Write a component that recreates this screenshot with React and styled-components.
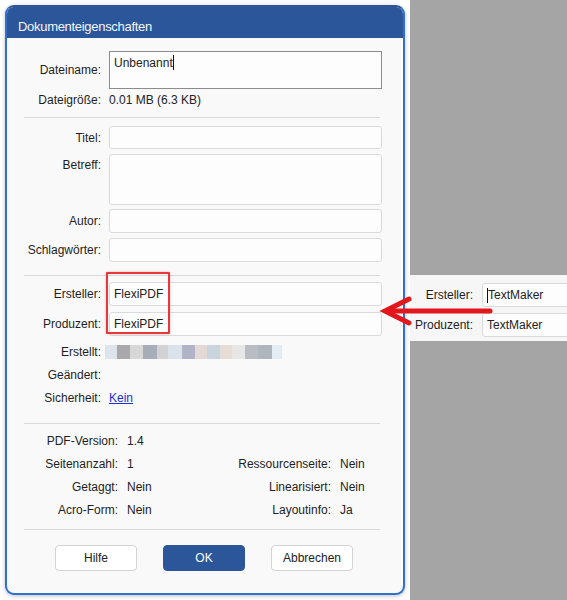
import React from 'react';
import styled, { createGlobalStyle } from 'styled-components';

const Global = createGlobalStyle`
  html, body {
    margin: 0;
    padding: 0;
    background: #ffffff;
  }
  * {
    box-sizing: border-box;
  }
`;

const Page = styled.div`
  position: relative;
  display: flex;
  width: 567px;
  height: 600px;
  overflow: hidden;
  font-family: 'Liberation Sans', Arial, sans-serif;
  font-size: 12px;
  color: #1e1e1e;
`;

const LeftPane = styled.div`
  width: 410px;
  padding: 5px 5px 5px 5px;
  background: #ffffff;
`;

const Dialog = styled.div`
  display: flex;
  flex-direction: column;
  width: 400px;
  height: 590px;
  border: 2px solid #2f6fd3;
  border-top-color: #2b579a;
  border-radius: 9px;
  overflow: hidden;
  background: #f9f9f9;
  box-shadow: 0 1px 4px rgba(0, 0, 0, 0.25);
`;

const TitleBar = styled.div`
  height: 31px;
  padding: 12px 0 0 11px;
  background: #2b579a;
  color: #f2f5fa;
  font-size: 13px;
  line-height: 16px;
  letter-spacing: -0.3px;
`;

const Body = styled.div`
  display: flex;
  flex-direction: column;
  padding: 0 21px 0 17px;
`;

const Row = styled.div`
  display: flex;
  align-items: ${p => (p.$top ? 'flex-start' : 'center')};
  gap: 8px;
  margin-top: ${p => p.$mt || 0}px;
  min-height: 18px;
`;

const Label = styled.div`
  width: 77px;
  flex: none;
  text-align: right;
  line-height: 18px;
  padding-top: ${p => (p.$top ? 2 : 0)}px;
  white-space: nowrap;
`;

const Value = styled.div`
  line-height: 18px;
  color: #222;
`;

const Field = styled.div`
  flex: 1;
  height: ${p => p.$h}px;
  background: #fdfdfd;
  border: 1px solid ${p => (p.$strong ? '#8c8c8c' : '#dadada')};
  border-radius: ${p => (p.$strong ? 0 : 3)}px;
  padding: ${p => (p.$strong ? '3px 4px' : '0 4px')};
  display: flex;
  align-items: ${p => (p.$strong ? 'flex-start' : 'center')};
  line-height: 16px;
  color: #222;
  white-space: nowrap;
  overflow: hidden;
`;

const Caret = styled.span`
  display: inline-block;
  width: 1px;
  height: 15px;
  background: #111;
`;

const Separator = styled.div`
  height: 1px;
  margin-top: ${p => p.$mt}px;
  margin-right: 2px;
  background: #d9d9d9;
`;

const Group = styled.div`
  position: relative;
  display: flex;
  flex-direction: column;
`;

const Highlight = styled.div`
  position: absolute;
  left: 82px;
  top: -4px;
  width: 64px;
  height: 62px;
  border: 2px solid #e8363a;
  border-radius: 1px;
  box-shadow: 0 0 3px rgba(200, 40, 40, 0.3);
  pointer-events: none;
`;

const Pixels = styled.div`
  display: flex;
  height: 14px;
  margin-left: -4px;
`;

const Pixel = styled.span`
  width: ${p => p.$w}px;
  height: 14px;
  background: ${p => p.$c};
`;

const Link = styled.a`
  color: #1b2fd6;
  text-decoration: underline;
  line-height: 18px;
`;

const InfoGrid = styled.div`
  display: grid;
  grid-template-columns: 94px 75px 120px auto;
  column-gap: 9px;
  row-gap: 5px;
  margin-top: 8px;
  line-height: 18px;
`;

const InfoLabel = styled.div`
  text-align: right;
  white-space: nowrap;
`;

const InfoValue = styled.div`
  color: #222;
`;

const Buttons = styled.div`
  display: flex;
  justify-content: center;
  gap: 26px;
  margin-top: 15px;
  margin-right: -2px;
`;

const Button = styled.button`
  width: 82px;
  height: 26px;
  border-radius: 4px;
  border: 1px solid ${p => (p.$primary ? '#2b579a' : '#d3d3d3')};
  background: ${p => (p.$primary ? '#2b579a' : '#ffffff')};
  color: ${p => (p.$primary ? '#ffffff' : '#222')};
  font-family: 'Liberation Sans', Arial, sans-serif;
  font-size: 12px;
  padding: 0;
`;

const RightPane = styled.div`
  flex: 1;
  background: #a5a5a5;
  padding-top: 275px;
`;

const Inset = styled.div`
  display: flex;
  flex-direction: column;
  gap: 6px;
  height: 66px;
  padding-top: 8px;
  background: #f6f6f6;
`;

const InsetRow = styled.div`
  display: flex;
  align-items: center;
  gap: 9px;
`;

const InsetLabel = styled.div`
  width: 63px;
  flex: none;
  text-align: right;
  white-space: nowrap;
`;

const InsetField = styled.div`
  width: 110px;
  height: 24px;
  flex: none;
  display: flex;
  align-items: center;
  padding-left: 4px;
  background: #fdfdfd;
  border: 1px solid #dadada;
  border-radius: 3px;
  color: #222;
`;

const Arrow = styled.svg`
  position: absolute;
  left: 381px;
  top: 296px;
  width: 115px;
  height: 32px;
  overflow: visible;
`;

const blur = [
  ['#dde4ec', 12], ['#aaa8ad', 13], ['#d8d7d7', 13], ['#a9adb8', 14],
  ['#d2d2d4', 11], ['#dce2ea', 14], ['#b1b4c6', 13], ['#e2d8d6', 12],
  ['#cad4de', 13], ['#e6dcd6', 12], ['#e6e6e6', 13], ['#b9bcc2', 13],
  ['#b0b6bd', 14], ['#e4ecf4', 10],
];

export default function App() {
  return (
    <Page>
      <Global />
      <LeftPane>
        <Dialog>
          <TitleBar>Dokumenteigenschaften</TitleBar>
          <Body>
            <Row $mt={13}>
              <Label>Dateiname:</Label>
              <Field $h={38} $strong>
                Unbenannt<Caret />
              </Field>
            </Row>
            <Row $mt={2}>
              <Label>Dateigröße:</Label>
              <Value>0.01 MB (6.3 KB)</Value>
            </Row>
            <Separator $mt={8} />

            <Row $mt={8}>
              <Label>Titel:</Label>
              <Field $h={23} />
            </Row>
            <Row $mt={5} $top>
              <Label $top>Betreff:</Label>
              <Field $h={51} />
            </Row>
            <Row $mt={4}>
              <Label>Autor:</Label>
              <Field $h={24} />
            </Row>
            <Row $mt={5}>
              <Label>Schlagwörter:</Label>
              <Field $h={24} />
            </Row>
            <Separator $mt={13} />

            <Group>
              <Row $mt={6}>
                <Label>Ersteller:</Label>
                <Field $h={24}>FlexiPDF</Field>
              </Row>
              <Row $mt={6}>
                <Label>Produzent:</Label>
                <Field $h={24}>FlexiPDF</Field>
              </Row>
              <Highlight />
            </Group>
            <Row $mt={7}>
              <Label>Erstellt:</Label>
              <Pixels>
                {blur.map(([c, w], i) => (
                  <Pixel key={i} $c={c} $w={w} />
                ))}
              </Pixels>
            </Row>
            <Row $mt={5}>
              <Label>Geändert:</Label>
            </Row>
            <Row $mt={5}>
              <Label>Sicherheit:</Label>
              <Link>Kein</Link>
            </Row>
            <Separator $mt={16} />

            <InfoGrid>
              <InfoLabel>PDF-Version:</InfoLabel>
              <InfoValue>1.4</InfoValue>
              <div />
              <div />
              <InfoLabel>Seitenanzahl:</InfoLabel>
              <InfoValue>1</InfoValue>
              <InfoLabel>Ressourcenseite:</InfoLabel>
              <InfoValue>Nein</InfoValue>
              <InfoLabel>Getaggt:</InfoLabel>
              <InfoValue>Nein</InfoValue>
              <InfoLabel>Linearisiert:</InfoLabel>
              <InfoValue>Nein</InfoValue>
              <InfoLabel>Acro-Form:</InfoLabel>
              <InfoValue>Nein</InfoValue>
              <InfoLabel>Layoutinfo:</InfoLabel>
              <InfoValue>Ja</InfoValue>
            </InfoGrid>
            <Separator $mt={10} />

            <Buttons>
              <Button>Hilfe</Button>
              <Button $primary>OK</Button>
              <Button>Abbrechen</Button>
            </Buttons>
          </Body>
        </Dialog>
      </LeftPane>

      <RightPane>
        <Inset>
          <InsetRow>
            <InsetLabel>Ersteller:</InsetLabel>
            <InsetField>
              <Caret />TextMaker
            </InsetField>
          </InsetRow>
          <InsetRow>
            <InsetLabel>Produzent:</InsetLabel>
            <InsetField>TextMaker</InsetField>
          </InsetRow>
        </Inset>
      </RightPane>

      <Arrow viewBox="0 0 115 32">
        <line x1="8" y1="15" x2="109" y2="15" stroke="#e3161b" strokeWidth="5" strokeLinecap="round" />
        <polyline points="28,3 4,15 28,27" fill="none" stroke="#e3161b" strokeWidth="5" strokeLinecap="round" strokeLinejoin="miter" />
      </Arrow>
    </Page>
  );
}
